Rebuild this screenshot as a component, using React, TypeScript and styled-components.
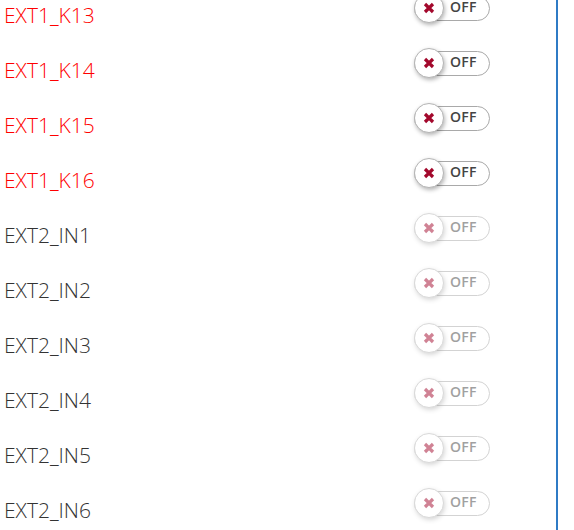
import React from "react";
import styled, { createGlobalStyle } from "styled-components";

const GlobalStyle = createGlobalStyle`
  html, body {
    margin: 0;
    padding: 0;
    background: #fff;
    overflow: hidden;
  }
`;

const Panel = styled.div`
  width: 556px;
  height: 530px;
  border-right: 2px solid #2f7bc5;
  overflow: hidden;
  box-sizing: content-box;
`;

const List = styled.div`
  margin-top: -33px;
`;

const Row = styled.div`
  display: grid;
  grid-template-columns: 410px 76px;
  height: 55px;
  padding-left: 4px;
  align-items: start;
`;

const Label = styled.div<{ $alert: boolean }>`
  font-family: "Open Sans", "Liberation Sans", sans-serif;
  font-weight: 300;
  font-size: 21px;
  line-height: 24px;
  padding-top: 36px;
  color: ${(p) => (p.$alert ? "#ff0000" : "#333")};
`;

const Track = styled.div<{ $disabled: boolean }>`
  position: relative;
  margin-top: 29px;
  width: 76px;
  height: 25px;
  box-sizing: border-box;
  border: 1px solid #a9a9a9;
  border-radius: 13px;
  opacity: ${(p) => (p.$disabled ? 0.5 : 1)};
  font-family: "Open Sans", "Liberation Sans", sans-serif;
  font-weight: 600;
  font-size: 14px;
  line-height: 20px;
  letter-spacing: 0.3px;
  color: #444;
  padding-left: 35px;
`;

const Knob = styled.span`
  position: absolute;
  left: -1px;
  top: -4px;
  width: 30px;
  height: 30px;
  border-radius: 50%;
  background: #fff;
  border: 1px solid #b5b5b5;
  box-sizing: border-box;
  box-shadow: 1px 2px 4px rgba(0, 0, 0, 0.3);
  display: flex;
  align-items: center;
  justify-content: center;
`;

const rows = [
  { name: "EXT1_K13", alert: true },
  { name: "EXT1_K14", alert: true },
  { name: "EXT1_K15", alert: true },
  { name: "EXT1_K16", alert: true },
  { name: "EXT2_IN1", alert: false },
  { name: "EXT2_IN2", alert: false },
  { name: "EXT2_IN3", alert: false },
  { name: "EXT2_IN4", alert: false },
  { name: "EXT2_IN5", alert: false },
  { name: "EXT2_IN6", alert: false },
];

const Cross = () => (
  <svg width="12" height="12" viewBox="0 0 12 12">
    <path
      d="M2 2 L10 10 M10 2 L2 10"
      stroke="#a3082c"
      strokeWidth="3.2"
      strokeLinecap="butt"
    />
  </svg>
);

const App = () => (
  <Panel>
    <GlobalStyle />
    <List>
      {rows.map((r) => (
        <Row key={r.name}>
          <Label $alert={r.alert}>{r.name}</Label>
          <Track $disabled={!r.alert}>
            <Knob>
              <Cross />
            </Knob>
            OFF
          </Track>
        </Row>
      ))}
    </List>
  </Panel>
);

export default App;
